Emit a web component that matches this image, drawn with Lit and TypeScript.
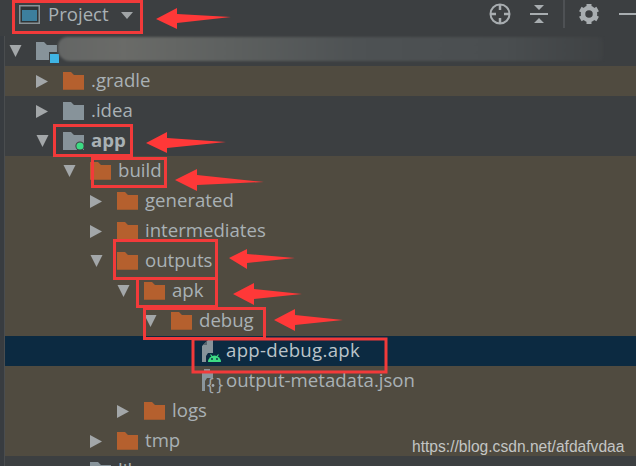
import { LitElement, html, css, svg } from "lit";
import { customElement } from "lit/decorators.js";

type Row = { label: string; depth: number; arrow?: "open" | "closed"; icon: string; tone?: string; bold?: boolean };

const ROWS: Row[] = [
  { label: "", depth: 0, arrow: "open", icon: "root" },
  { label: ".gradle", depth: 1, arrow: "closed", icon: "orange", tone: "excluded" },
  { label: ".idea", depth: 1, arrow: "closed", icon: "grey" },
  { label: "app", depth: 1, arrow: "open", icon: "module", bold: true },
  { label: "build", depth: 2, arrow: "open", icon: "orange", tone: "excluded" },
  { label: "generated", depth: 3, arrow: "closed", icon: "orange", tone: "excluded" },
  { label: "intermediates", depth: 3, arrow: "closed", icon: "orange", tone: "excluded" },
  { label: "outputs", depth: 3, arrow: "open", icon: "orange", tone: "excluded" },
  { label: "apk", depth: 4, arrow: "open", icon: "orange", tone: "excluded" },
  { label: "debug", depth: 5, arrow: "open", icon: "orange", tone: "excluded" },
  { label: "app-debug.apk", depth: 6, icon: "apk", tone: "selected" },
  { label: "output-metadata.json", depth: 6, icon: "json", tone: "excluded" },
  { label: "logs", depth: 4, arrow: "closed", icon: "orange", tone: "excluded" },
  { label: "tmp", depth: 3, arrow: "closed", icon: "orange", tone: "excluded" },
  { label: "lib", depth: 2, icon: "grey" },
];

const BOXES = [
  [13.5, 1.5, 128, 31], [54.5, 125.5, 77, 30], [92.5, 158.5, 73, 28], [114.5, 240.5, 102, 38],
  [137.5, 278.5, 79, 28], [144.5, 308.5, 120, 30], [193, 339, 193, 33],
];
const ARROWS = [
  "156,19 177,8 177,14 231,17 177,23 177,29",
  "146,143 167,132 167,138 226,142 167,148 167,153",
  "175,180 197,169 197,175 264,182 197,185 197,191",
  "229,258 247,249 247,254 295,258 247,263 247,269",
  "233,294 254,283 254,289 302,294 254,299 254,305",
  "274,320 295,309 295,315 343,320 295,325 295,331",
];

const FOLDER = "M0 0h8l3 3h10v15H0z";

function icon(kind: string) {
  if (kind === "apk")
    return html`<svg class="ic" width="23" height="24" viewBox="0 0 23 24">
      <path d="M4 7l6-6h5v13H10l-2 3v6H4z" fill="#87939a"/>
      <path d="M5 6l4-4v4z" fill="#55636c"/>
      <path d="M10 24a6.5 6.5 0 0 1 13 0z" fill="#3ddc84" transform="translate(0 -1)"/>
      <path d="M12.5 15.5l2 2.5M20.5 15.5l-2 2.5" stroke="#3ddc84" stroke-width="1.2"/>
      <circle cx="14" cy="20" r=".9" fill="#0c2a41"/><circle cx="19" cy="20" r=".9" fill="#0c2a41"/>
    </svg>`;
  if (kind === "json")
    return html`<svg class="ic" width="24" height="24" viewBox="0 0 24 24">
      <path d="M4 2h11v7H9l-2 3v10H4z" fill="#8a959c"/>
      <path d="M6 0h6v2H6z" fill="#8a959c"/>
      <text x="7.5" y="21" class="brace">{}</text>
      <circle cx="15" cy="16.5" r="1.4" fill="#a3aab0"/>
    </svg>`;
  const fill = kind === "orange" ? "#b5602e" : "#87939a";
  return html`<svg class="ic" width="21" height="18" viewBox="0 0 21 18">
    <path d=${FOLDER} fill=${fill}/>
    ${kind === "orange" ? svg`<path d="M0 17h21v1H0z" fill="#9c5a30"/>` : ""}
    ${kind === "root" ? svg`<rect x="13" y="10" width="10" height="11" fill="#3c3f41"/><rect x="14" y="12" width="9" height="9" fill="#3fb4e4"/>` : ""}
    ${kind === "module" ? svg`<circle cx="17" cy="14" r="4.6" fill="#3c3f41"/><circle cx="17" cy="14" r="3.6" fill="#3ddc84"/>` : ""}
  </svg>`;
}

@customElement("app-root")
export class AppRoot extends LitElement {
  static styles = css`
    :host { display: block; width: 636px; height: 466px; overflow: hidden; position: relative; background: #3c3f41; font-family: "Open Sans", "Noto Sans", sans-serif; color: #a9b1b5; }
    .bar { height: 36px; display: flex; align-items: flex-start; box-sizing: border-box; padding: 5px 0 0 19px; }
    .view { width: 21px; height: 19px; }
    .title { margin-left: 8px; font-size: 18.6px; line-height: 18px; width: 59px; white-space: nowrap; }
    .caret { margin: 7px 0 0 14px; width: 12px; height: 7px; }
    .tools { margin-left: auto; display: flex; align-items: flex-start; margin-top: -5px; }
    .tools svg { display: block; }
    .tree { padding-left: 4px; background: linear-gradient(90deg, #383c40 4px, #4a4d4f 4px); background-size: 5px 100%; background-repeat: no-repeat; }
    .tree-inner { margin-left: 1px; }
    .row { height: 30px; display: flex; align-items: center; white-space: nowrap; font-size: 18.6px; }
    .excluded { background: #504b40; }
    .selected { background: #0c2a41; color: #bbc4c9; letter-spacing: .3px; }
    .tw { width: 27px; flex: none; display: flex; align-items: center; }
    .tw svg { display: block; }
    .iw { width: 27px; flex: none; display: flex; align-items: center; }
    .ic { display: block; overflow: visible; }
    .bold { font-weight: 700; }
    .label { margin-left: 1px; padding-bottom: 4px; }
    .blur { width: 545px; height: 24px; margin: -4px 0 0 -5px; filter: blur(1.2px); background: linear-gradient(90deg, #646665 0, #6a6b68 12%, #5e6160 30%, #4e5254 55%, #4a4e50 82%, #3f4244 100%); border-radius: 9px 4px 4px 12px; }
    .mark { position: absolute; left: 412px; top: 438px; font-family: "Liberation Sans", sans-serif; font-size: 15.6px; color: #c3c5c4; white-space: nowrap; }
    .ann { position: absolute; left: 0; top: 0; }
    .brace { font-family: "DejaVu Sans", sans-serif; font-size: 15px; fill: #a3aab0; }
  `;

  render() {
    return html`
      <div class="bar">
        <svg class="view" viewBox="0 0 21 19">
          <rect width="21" height="19" fill="#8a9296"/><rect x="1.5" y="1.5" width="18" height="16" fill="#2f3436"/>
          <rect x="3" y="5" width="15" height="11" fill="#3d7f9d"/>
        </svg>
        <span class="title">Project</span>
        <svg class="caret" viewBox="0 0 12 7"><path d="M0 0h12L6 7z" fill="#a0a4a6"/></svg>
        <div class="tools">
          <svg width="160" height="30" viewBox="476 0 160 30">
            <g fill="none" stroke="#a8adb0" stroke-width="2">
              <circle cx="500" cy="14" r="9.5"/>
              <path d="M500 4v6M500 18v6M490 14h6M504 14h6" stroke-width="2.5"/>
            </g>
            <path d="M530 14h18" stroke="#a8adb0" stroke-width="2"/>
            <path d="M534 5h10l-5 5zM534 23h10l-5-5z" fill="#a8adb0"/>
            <path d="M564 0v28" stroke="#55595b" stroke-width="1.5"/>
            <circle cx="589" cy="14" r="6" fill="none" stroke="#a8adb0" stroke-width="4.5"/>
            <g fill="#a8adb0">
              ${[0, 60, 120, 180, 240, 300].map((a) => svg`<rect x="586.5" y="4" width="5" height="4" transform="rotate(${a} 589 14)"/>`)}
            </g>
            <path d="M619 14h17" stroke="#a8adb0" stroke-width="2"/>
          </svg>
        </div>
      </div>
      <div class="tree">
        <div class="tree-inner">
        ${ROWS.map(
          (r) => html`<div class="row ${r.tone ?? ""} ${r.bold ? "bold" : ""}" style="padding-left:${4 + r.depth * 27}px">
            <span class="tw">${r.arrow === "open"
              ? html`<svg width="13" height="12"><path d="M.5 0h12L6.5 12z" fill="#a3a7a9"/></svg>`
              : r.arrow === "closed"
              ? html`<svg width="12" height="13"><path d="M0 0l12 6.5L0 13z" fill="#a3a7a9"/></svg>`
              : ""}</span>
            <span class="iw">${icon(r.icon)}</span>
            ${r.icon === "root" ? html`<span class="blur"></span>` : html`<span class="label">${r.label}</span>`}
          </div>`
        )}
        </div>
      </div>
      <span class="mark">https://blog.csdn.net/afdafvdaa</span>
      <svg class="ann" width="636" height="466">
        ${BOXES.map((b) => svg`<rect x=${b[0]} y=${b[1]} width=${b[2]} height=${b[3]} fill="none" stroke="#f23a3a" stroke-width="3"/>`)}
        ${ARROWS.map((p) => svg`<polygon points=${p} fill="#ff3838"/>`)}
      </svg>
    `;
  }
}
